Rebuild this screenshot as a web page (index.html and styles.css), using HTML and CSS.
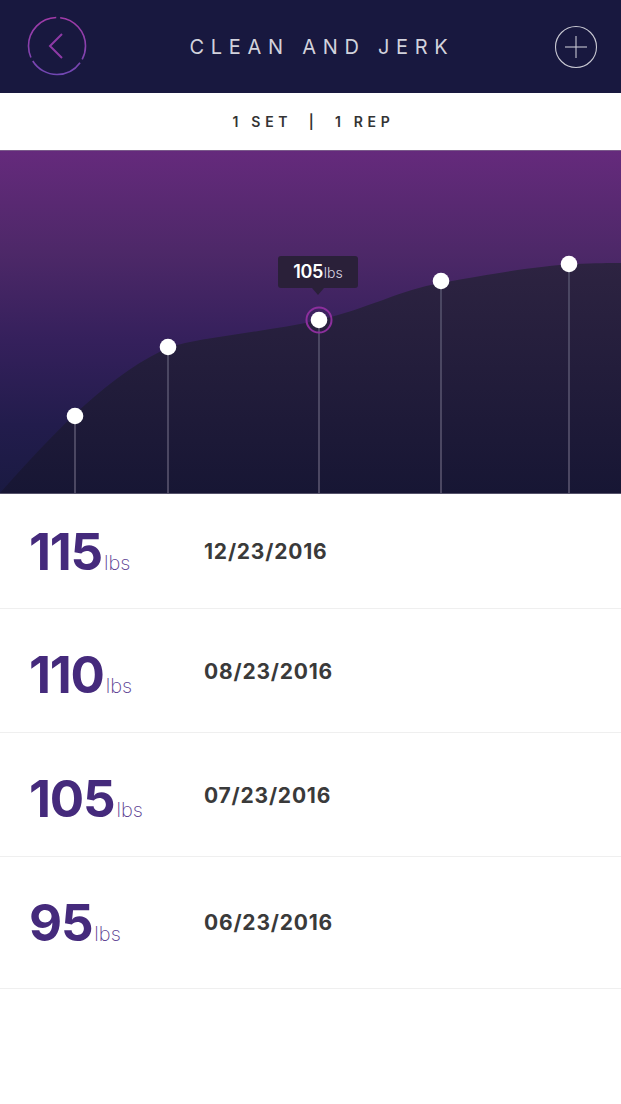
FILE: index.html
```html
<!DOCTYPE html>
<html>
<head>
<meta charset="utf-8">
<link rel="stylesheet" href="styles.css">
</head>
<body>
<div class="app">
  <header class="topbar">
    <button class="icon-btn back" aria-label="Back">
      <svg width="62" height="62" viewBox="0 0 62 62">
        <defs>
          <linearGradient id="ringGrad" x1="0" y1="0" x2="0" y2="1">
            <stop offset="0" stop-color="#a13aa8"/>
            <stop offset="1" stop-color="#7147b3"/>
          </linearGradient>
        </defs>
        <circle cx="31" cy="31" r="28.5" fill="none" stroke="url(#ringGrad)" stroke-width="1.6" stroke-dasharray="55.7 4" stroke-dashoffset="41.8"/>
        <polyline points="36,19 24,31 36,43" fill="none" stroke="#8e3aa6" stroke-width="2"/>
      </svg>
    </button>
    <h1 class="title">CLEAN AND JERK</h1>
    <button class="icon-btn add" aria-label="Add">
      <svg width="44" height="44" viewBox="0 0 44 44">
        <circle cx="22" cy="22" r="20.5" fill="none" stroke="#c9c9d3" stroke-width="1.1"/>
        <line x1="11" y1="22" x2="33" y2="22" stroke="#c9c9d3" stroke-width="1.1"/>
        <line x1="22" y1="11" x2="22" y2="33" stroke="#c9c9d3" stroke-width="1.1"/>
      </svg>
    </button>
  </header>

  <div class="subbar">1 SET &nbsp;|&nbsp; 1 REP</div>

  <section class="chart">
    <svg class="chart-svg" width="621" height="343" viewBox="0 0 621 343">
      <defs>
        <linearGradient id="areaGrad" x1="0" y1="0" x2="0" y2="1">
          <stop offset="0" stop-color="#2d2341"/>
          <stop offset="1" stop-color="#171634"/>
        </linearGradient>
      </defs>
      <path d="M0,343 C30,310 90,240 150,207 C165,199 172,196 185,193 C230,184 275,180 319,170 C370,158 400,140 441,133 C500,122 540,116 575,114 C595,113 610,113 621,113 L621,343 Z" fill="url(#areaGrad)"/>
      <g stroke="#4b4762" stroke-width="2">
        <line x1="75" y1="266" x2="75" y2="343"/>
        <line x1="168" y1="197" x2="168" y2="343"/>
        <line x1="319" y1="171" x2="319" y2="343"/>
        <line x1="441" y1="131" x2="441" y2="343"/>
        <line x1="569" y1="114" x2="569" y2="343"/>
      </g>
      <circle cx="319" cy="170" r="12.5" fill="none" stroke="#8d2f9d" stroke-width="2"/>
      <g fill="#ffffff">
        <circle cx="75" cy="266" r="8.3"/>
        <circle cx="168" cy="197" r="8.3"/>
        <circle cx="319" cy="170" r="8.3"/>
        <circle cx="441" cy="131" r="8.3"/>
        <circle cx="569" cy="114" r="8.3"/>
      </g>
    </svg>
    <div class="tooltip"><span class="tip-num">105</span><span class="tip-unit">lbs</span></div>
  </section>

  <ul class="list">
    <li class="row"><span class="weight"><span class="num">115</span><span class="unit">lbs</span></span><span class="date">12/23/2016</span></li>
    <li class="row"><span class="weight"><span class="num">110</span><span class="unit">lbs</span></span><span class="date">08/23/2016</span></li>
    <li class="row"><span class="weight"><span class="num">105</span><span class="unit">lbs</span></span><span class="date">07/23/2016</span></li>
    <li class="row"><span class="weight"><span class="num">95</span><span class="unit">lbs</span></span><span class="date">06/23/2016</span></li>
  </ul>
</div>
</body>
</html>
```

FILE: styles.css
```css
* { box-sizing: border-box; }
html, body { margin: 0; padding: 0; background: #ffffff; }
body { font-family: "Inter", "Roboto", "Liberation Sans", sans-serif; }

.app { width: 621px; }

.topbar {
  height: 93px;
  background: #18183f;
  display: flex;
  align-items: center;
  justify-content: space-between;
  padding: 0 23px 0 26px;
}
.icon-btn {
  background: none;
  border: 0;
  padding: 0;
  margin: 0;
  display: flex;
  cursor: pointer;
}
.back { margin-top: -1px; }
.add { margin-top: 1px; }
.title {
  margin: 0;
  font-weight: 400;
  font-size: 20px;
  letter-spacing: 6.7px;
  color: #d2d2dc;
  padding-left: 2px;
}

.subbar {
  height: 57px;
  display: flex;
  align-items: center;
  justify-content: center;
  font-size: 14px;
  font-weight: 600;
  letter-spacing: 4.7px;
  color: #333333;
  padding-bottom: 1px;
  padding-left: 6px;
}

.chart {
  position: relative;
  height: 343px;
  background: linear-gradient(to bottom, #652a7c 0%, #4d2868 30%, #35205c 55%, #221c4c 80%, #1a1a42 100%);
  border-top: 1px solid #7a5a8a;
}
.chart-svg { display: block; position: absolute; left: 0; top: -1px; }
.tooltip {
  position: absolute;
  left: 278px;
  top: 105px;
  width: 80px;
  height: 32px;
  background: #2a2039;
  border-radius: 3px;
  display: flex;
  align-items: baseline;
  justify-content: center;
  padding-top: 5px;
  color: #ffffff;
}
.tooltip::after {
  content: "";
  position: absolute;
  left: 34px;
  bottom: -7px;
  border-left: 6px solid transparent;
  border-right: 6px solid transparent;
  border-top: 7px solid #2a2039;
}
.tip-num { font-size: 18px; font-weight: 600; letter-spacing: -0.4px; }
.tip-unit { font-size: 14px; font-weight: 300; color: #dcd8e4; margin-left: 1px; }

.list {
  list-style: none;
  margin: 0;
  padding: 0;
  border-top: 1px solid #55526a;
}
.row {
  height: 124px;
  display: flex;
  align-items: center;
  border-bottom: 1px solid #efefef;
  padding-left: 29px;
}
.row:first-child { height: 115px; }
.row:nth-child(2), .row:nth-child(3) { padding-top: 8px; }
.row:last-child { height: 132px; }
.weight {
  width: 175px;
  display: flex;
  align-items: baseline;
  color: #452a7c;
}
.num {
  font-size: 51px;
  font-weight: 700;
  letter-spacing: -1.2px;
  line-height: 1;
}
.unit {
  font-size: 20px;
  font-weight: 200;
  color: #5b3e92;
  margin-left: 2px;
}
.date {
  font-size: 21px;
  font-weight: 700;
  color: #3a3a3a;
  letter-spacing: 0.8px;
}
.row:nth-child(2) .date, .row:nth-child(3) .date { margin-top: -6px; }
```
